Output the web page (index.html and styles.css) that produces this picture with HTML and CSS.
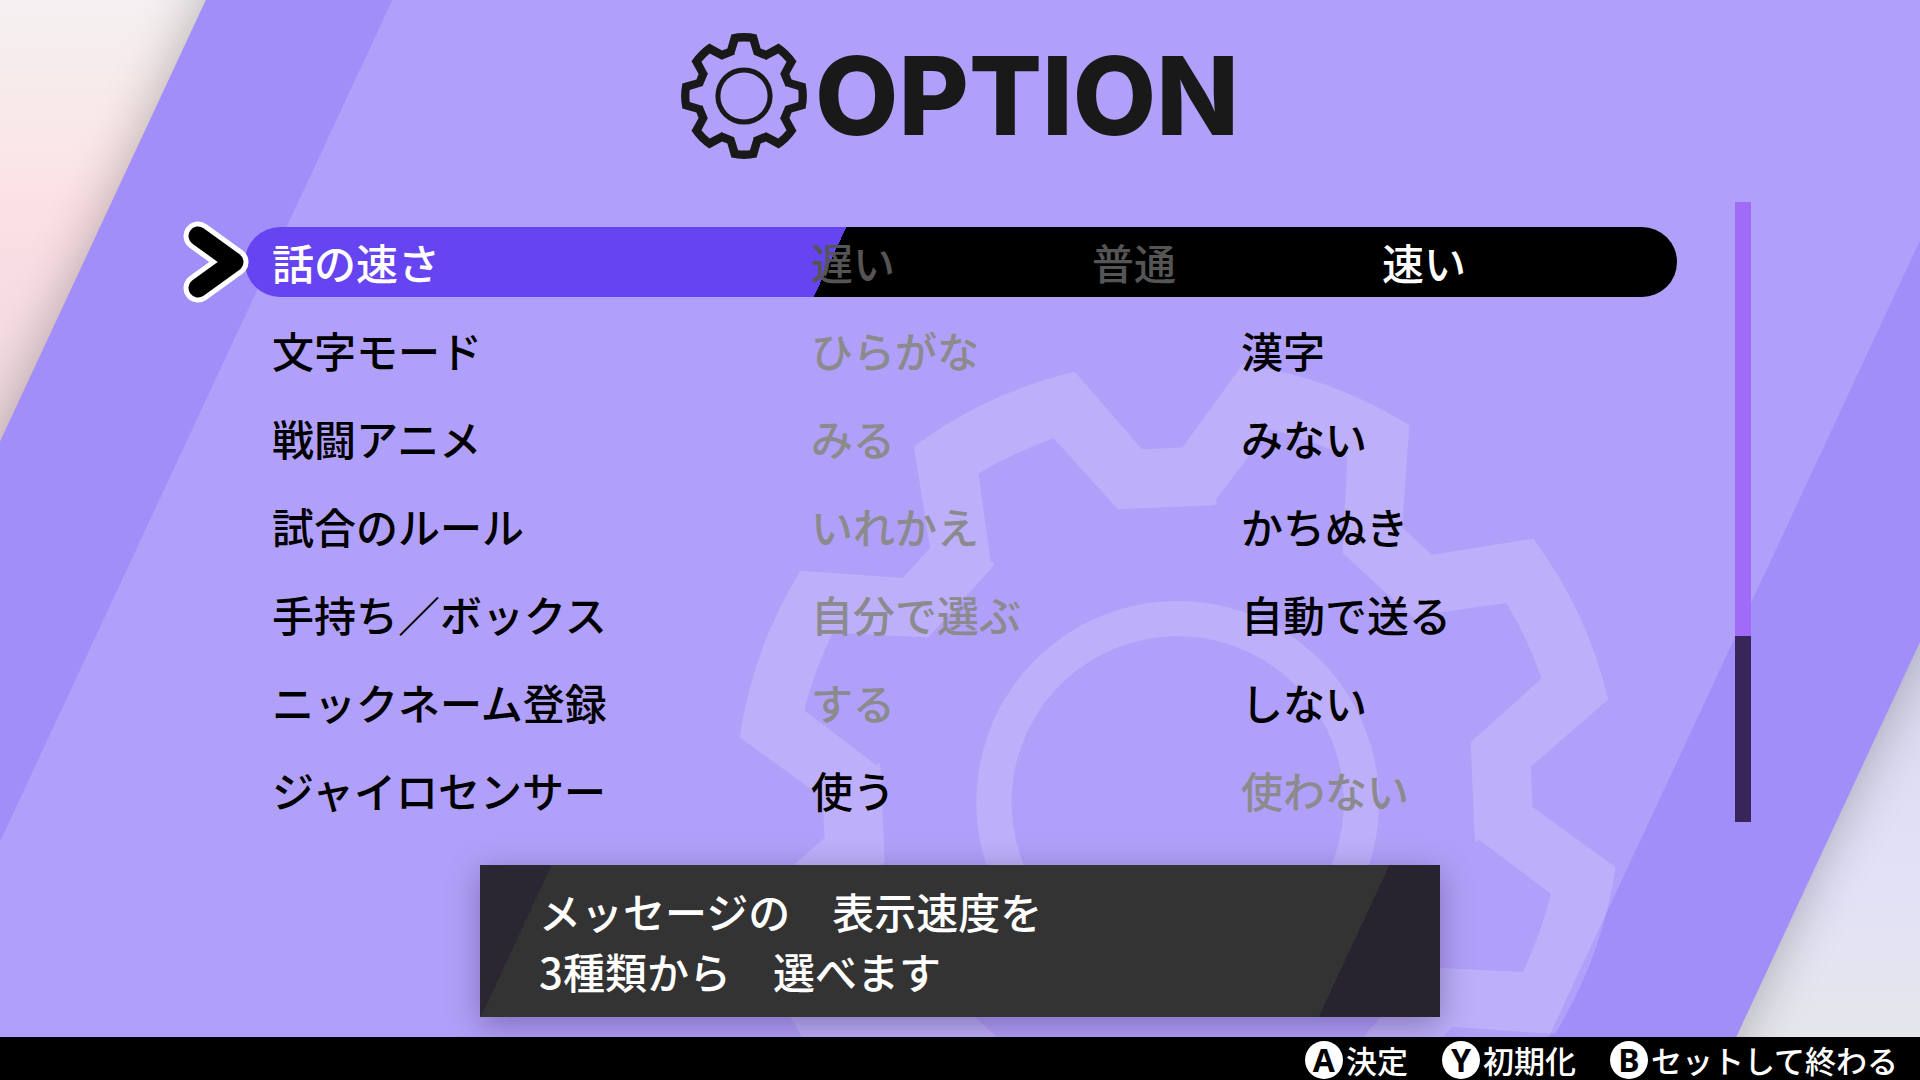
FILE: index.html
```html
<!DOCTYPE html>
<html lang="ja">
<head>
<meta charset="utf-8">
<meta name="viewport" content="width=device-width, initial-scale=1">
<title>OPTION</title>
<link rel="stylesheet" href="styles.css">
</head>
<body>
<div class="screen">
  <svg class="backdrop" viewBox="0 0 1920 1034" preserveAspectRatio="xMidYMid slice" aria-hidden="true">
    <defs>
      <path id="tooth" d="M-16.6-47.6L-12.6-61.6Q0-64.2 12.6-61.6L16.6-47.6L21.9-45.4L22.8-45L23-36L22.2-36.2L9.9-41.3L5.9-54.3Q0-54.9-5.9-54.3L-9.9-41.3Z"/>
      <g id="gear">
        <use href="#tooth"/>
        <use href="#tooth" transform="rotate(45)"/>
        <use href="#tooth" transform="rotate(90)"/>
        <use href="#tooth" transform="rotate(135)"/>
        <use href="#tooth" transform="rotate(180)"/>
        <use href="#tooth" transform="rotate(225)"/>
        <use href="#tooth" transform="rotate(270)"/>
        <use href="#tooth" transform="rotate(315)"/>
        <path fill-rule="evenodd" d="M-28.6 0a28.6 28.6 0 1 0 57.2 0a28.6 28.6 0 1 0-57.2 0ZM-23.6 0a23.6 23.6 0 1 0 47.2 0a23.6 23.6 0 1 0-47.2 0Z"/>
      </g>
      <linearGradient id="sky-left" x1="0" y1="0" x2="0" y2="446" gradientUnits="userSpaceOnUse">
        <stop offset="0" stop-color="#f4f0f1"/>
        <stop offset=".3" stop-color="#fae8e8"/>
        <stop offset=".48" stop-color="#fbe0e5"/>
        <stop offset="1" stop-color="#eed9df"/>
      </linearGradient>
      <linearGradient id="sky-right" x1="0" y1="632" x2="0" y2="1034" gradientUnits="userSpaceOnUse">
        <stop offset="0" stop-color="#d8d8ee"/>
        <stop offset=".6" stop-color="#e2e1f7"/>
        <stop offset="1" stop-color="#e6e6ec"/>
      </linearGradient>
      <filter id="soft" x="-10%" y="-20%" width="120%" height="140%"><feGaussianBlur stdDeviation="26"/></filter>
    </defs>
    <rect width="960" height="1034" fill="url(#sky-left)"/>
    <rect x="960" width="960" height="1034" fill="url(#sky-right)"/>
    <path class="band-shadow" filter="url(#soft)" d="M254-100H2262L1687 1134H-321Z"/>
    <path class="band" d="M208 0H2215L1734 1034H-274Z"/>
    <path class="panel" d="M394 0H2029L1547 1034H-88Z"/>
    <g class="watermark" transform="translate(1177 800) rotate(20) scale(7.02)"><use href="#gear"/></g>
  </svg>

  <header class="title">
    <svg class="title-icon" viewBox="-63 -63 126 126" aria-hidden="true"><use href="#gear"/></svg>
    <h1>OPTION</h1>
  </header>

  <main class="content">
    <form class="options">
      <div class="row selected" role="radiogroup" aria-labelledby="speed">
        <svg class="cursor" viewBox="0 0 66 82" aria-hidden="true">
          <path class="cursor-edge" d="M15 15L51 41L15 67"/>
          <path class="cursor-core" d="M15 15L51 41L15 67"/>
        </svg>
        <span class="name" id="speed">話の速さ</span>
        <div class="choices three">
          <label><input type="radio" name="speed"><span>遅い</span></label>
          <label><input type="radio" name="speed"><span>普通</span></label>
          <label><input type="radio" name="speed" checked><span>速い</span></label>
        </div>
      </div>
      <div class="row" role="radiogroup" aria-labelledby="mode">
        <span class="name" id="mode">文字モード</span>
        <div class="choices">
          <label><input type="radio" name="mode"><span>ひらがな</span></label>
          <label><input type="radio" name="mode" checked><span>漢字</span></label>
        </div>
      </div>
      <div class="row" role="radiogroup" aria-labelledby="anime">
        <span class="name" id="anime">戦闘アニメ</span>
        <div class="choices">
          <label><input type="radio" name="anime"><span>みる</span></label>
          <label><input type="radio" name="anime" checked><span>みない</span></label>
        </div>
      </div>
      <div class="row" role="radiogroup" aria-labelledby="rule">
        <span class="name" id="rule">試合のルール</span>
        <div class="choices">
          <label><input type="radio" name="rule"><span>いれかえ</span></label>
          <label><input type="radio" name="rule" checked><span>かちぬき</span></label>
        </div>
      </div>
      <div class="row" role="radiogroup" aria-labelledby="box">
        <span class="name" id="box">手持ち／ボックス</span>
        <div class="choices">
          <label><input type="radio" name="box"><span>自分で選ぶ</span></label>
          <label><input type="radio" name="box" checked><span>自動で送る</span></label>
        </div>
      </div>
      <div class="row" role="radiogroup" aria-labelledby="nick">
        <span class="name" id="nick">ニックネーム登録</span>
        <div class="choices">
          <label><input type="radio" name="nick"><span>する</span></label>
          <label><input type="radio" name="nick" checked><span>しない</span></label>
        </div>
      </div>
      <div class="row" role="radiogroup" aria-labelledby="gyro">
        <span class="name" id="gyro">ジャイロセンサー</span>
        <div class="choices">
          <label><input type="radio" name="gyro" checked><span>使う</span></label>
          <label><input type="radio" name="gyro"><span>使わない</span></label>
        </div>
      </div>
    </form>
    <div class="scrollbar"><div class="thumb"></div></div>
  </main>

  <p class="message">メッセージの　表示速度を<br>3種類から　選べます</p>
</div>

<footer class="keys">
  <button type="button"><span class="key">A</span>決定</button>
  <button type="button"><span class="key">Y</span>初期化</button>
  <button type="button"><span class="key">B</span>セットして終わる</button>
</footer>
</body>
</html>
```

FILE: styles.css
```css
* { box-sizing: border-box; }

body {
  margin: 0;
  min-height: 100vh;
  display: flex;
  flex-direction: column;
  background: #000;
  color: #000;
  font-family: "Noto Sans CJK JP", "Noto Sans", sans-serif;
  font-weight: 500;
}

.screen {
  position: relative;
  flex: 1;
  display: flex;
  flex-direction: column;
  align-items: center;
  overflow: hidden;
  padding-bottom: 20px;
}

/* backdrop */
.backdrop {
  position: absolute;
  inset: 0;
  z-index: -1;
  width: 100%;
  height: 100%;
}
.band { fill: #a28ef9; }
.panel { fill: #b1a0f9; }
.band-shadow { fill: #000; opacity: .26; }
.watermark { fill: #fff; opacity: .16; }

/* title */
.title {
  display: flex;
  align-items: center;
  justify-content: center;
  gap: 8px;
  padding-top: 32px;
  height: 160px;
  color: #191919;
}
.title-icon {
  width: 126px;
  height: 126px;
  fill: currentColor;
}
.title h1 {
  margin: 0;
  font: 800 108px/126px Inter, "Liberation Sans", sans-serif;
}

/* option list */
.content {
  display: flex;
  align-self: stretch;
  gap: 58px;
  margin: 42px 169px 0 245px;
}
.options {
  flex: 1;
  display: flex;
  flex-direction: column;
  gap: 18px;
  padding-top: 25px;
}
.row {
  position: relative;
  display: flex;
  align-items: center;
  height: 70px;
  padding-left: 27px;
  border-radius: 35px;
  font-size: 42px;
  line-height: 70px;
  white-space: nowrap;
}
.name { width: 539px; }
.choices {
  flex: 1;
  display: grid;
  grid-template-columns: 430fr 436fr;
}
.choices.three { grid-template-columns: 281fr 290fr 295fr; }
.choices label {
  position: relative;
  color: #8b8a8c;
}
.choices input {
  position: absolute;
  inset: 0;
  margin: 0;
  appearance: none;
}
.choices label:has(:checked) { color: #000; }
.selected {
  background: linear-gradient(115deg, #6644f2 0 545px, #000 545px);
  color: #fff;
}
.selected .choices label { color: #555; }
.selected .choices label:has(:checked) { color: #fff; }

.cursor {
  position: absolute;
  left: -62px;
  top: -6px;
  width: 66px;
  height: 82px;
  fill: none;
  stroke-linecap: round;
  stroke-linejoin: round;
}
.cursor-edge { stroke: #fff; stroke-width: 29px; }
.cursor-core { stroke: #000; stroke-width: 19px; }

.scrollbar {
  display: flex;
  flex-direction: column;
  justify-content: flex-end;
  width: 16px;
  height: 620px;
  background: #a06bf6;
}
.thumb {
  height: 30%;
  background: #38265a;
}

/* help message */
.message {
  width: 50%;
  margin: 40px 0 0;
  padding: 16px 59px;
  background: linear-gradient(115deg, #2a2632 0 65px, #333 65px calc(100% - 110px), #28242f calc(100% - 110px));
  box-shadow: 0 8px 30px rgba(40, 20, 70, .36);
  color: #fff;
  font-size: 42px;
  line-height: 60px;
}

/* key guide */
.keys {
  display: flex;
  justify-content: flex-end;
  align-items: center;
  gap: 34px;
  height: 46px;
  padding-right: 22px;
  background: #000;
}
.keys button {
  display: flex;
  align-items: center;
  gap: 3px;
  padding: 0;
  border: 0;
  background: none;
  color: #fff;
  font: inherit;
  font-size: 31px;
  line-height: 46px;
}
.key {
  width: 38px;
  height: 38px;
  border-radius: 50%;
  background: #fff;
  color: #000;
  font: 700 32px/38px "Noto Sans", sans-serif;
  text-align: center;
}
```
